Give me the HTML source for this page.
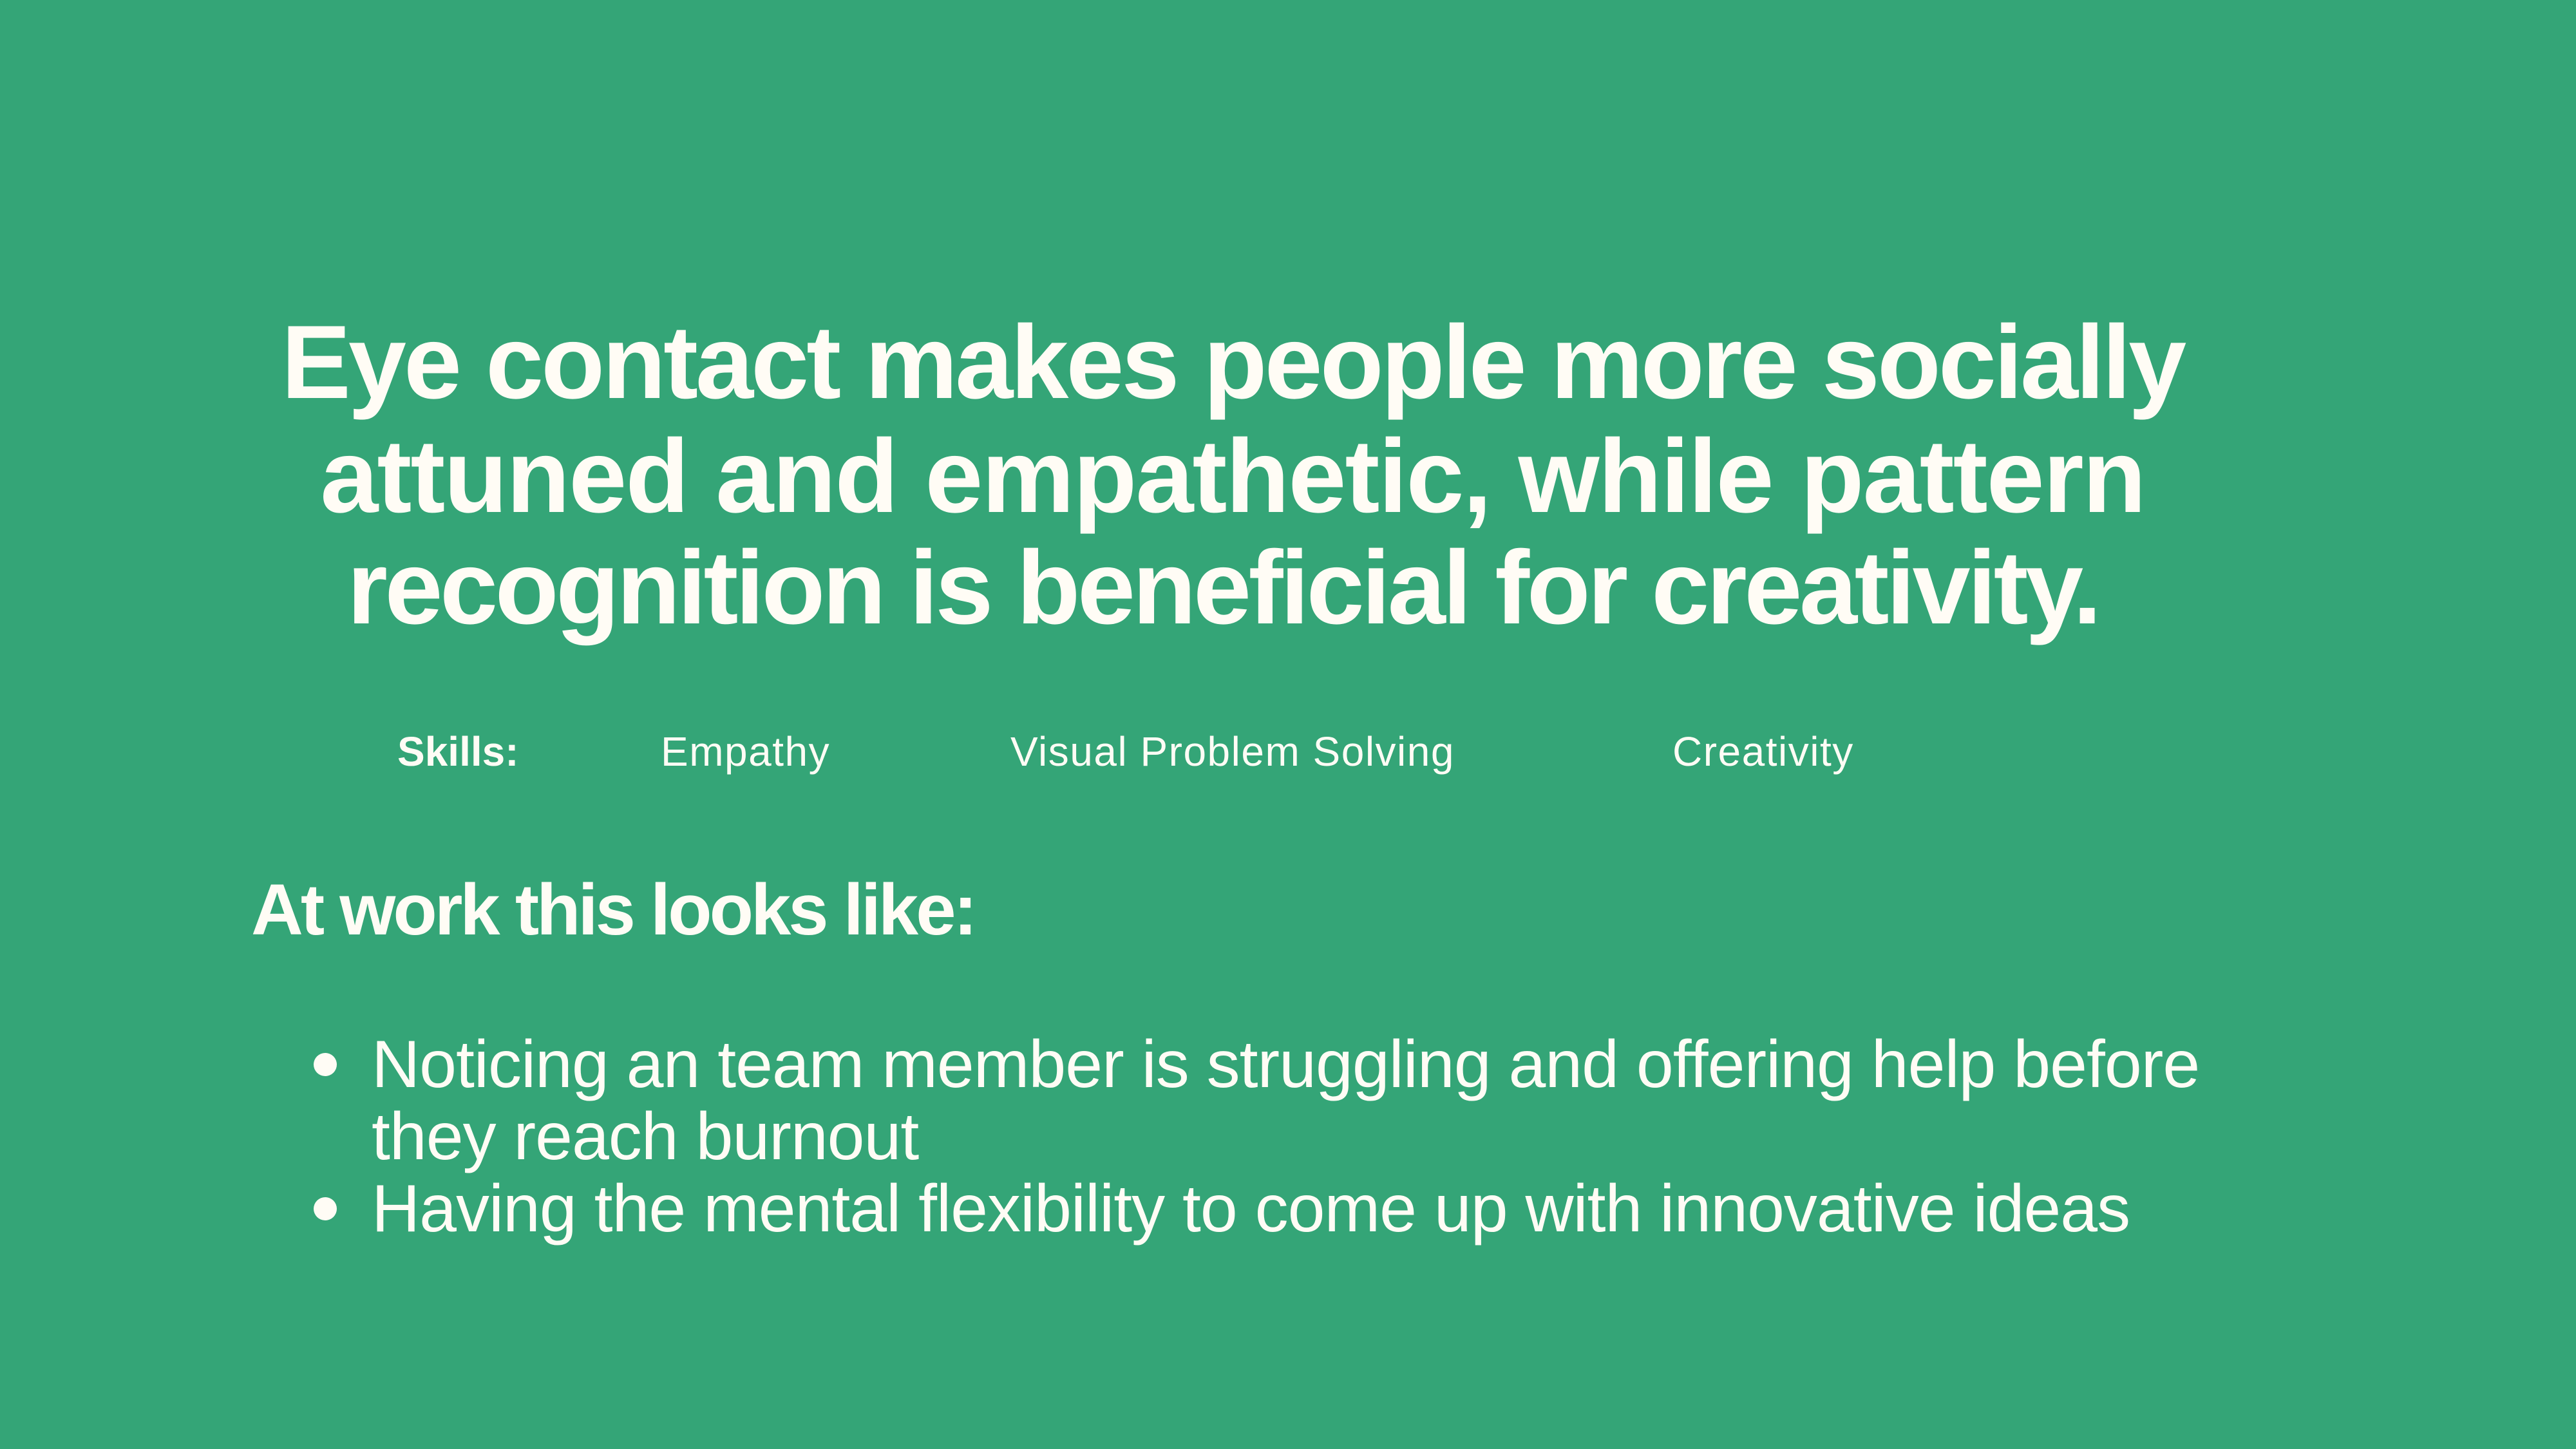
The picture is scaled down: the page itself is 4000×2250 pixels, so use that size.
<!DOCTYPE html>
<html><head><meta charset="utf-8"><style>
html,body{margin:0;padding:0}
body{width:4000px;height:2250px;background:#34a577;position:relative;overflow:hidden;font-family:"Liberation Sans",sans-serif;color:#fffcf5}
.h{position:absolute;left:0;width:3828px;text-align:center;font-weight:bold;font-size:162px;line-height:162px;letter-spacing:-4px;white-space:nowrap}
.s{position:absolute;font-size:64px;line-height:64px;letter-spacing:1.5px;white-space:nowrap}
.w{position:absolute;left:390px;top:1357px;font-weight:bold;font-size:112px;line-height:112px;letter-spacing:-4px;white-space:nowrap}
.b{position:absolute;left:577px;font-size:104px;line-height:104px;letter-spacing:-1px;white-space:nowrap}
.d{position:absolute;left:487px;width:36px;height:36px;border-radius:50%;background:#fffcf5}
</style></head><body>
<div class="h" style="top:482px">Eye contact makes people more socially</div>
<div class="h" style="top:659px;letter-spacing:-2px">attuned and empathetic, while pattern</div>
<div class="h" style="top:832px;left:-15px;letter-spacing:-4.5px">recognition is beneficial for creativity.</div>
<div class="s" style="left:617px;top:1135px;font-weight:bold;letter-spacing:0">Skills:</div>
<div class="s" style="left:1026px;top:1135px">Empathy</div>
<div class="s" style="left:1569px;top:1135px">Visual Problem Solving</div>
<div class="s" style="left:2597px;top:1135px">Creativity</div>
<div class="w">At work this looks like:</div>
<div class="d" style="top:1635px"></div>
<div class="b" style="top:1601px">Noticing an team member is struggling and offering help before</div>
<div class="b" style="top:1713px">they reach burnout</div>
<div class="d" style="top:1859px"></div>
<div class="b" style="top:1825px">Having the mental flexibility to come up with innovative ideas</div>
</body></html>
